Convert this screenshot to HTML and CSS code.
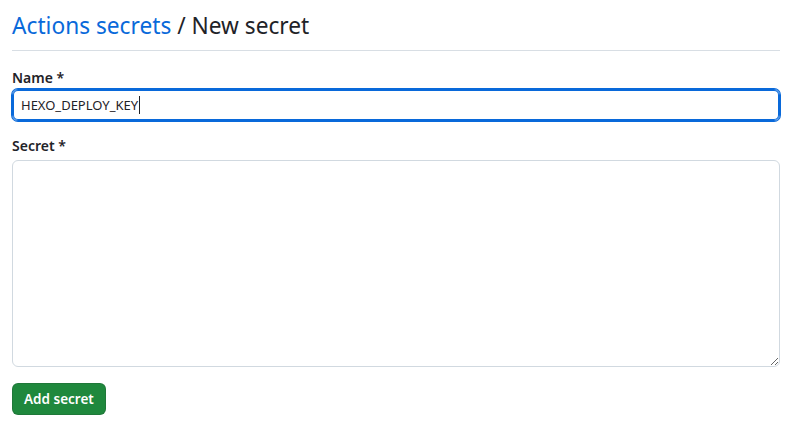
FILE: index.html
```html
<!DOCTYPE html>
<html>
<head>
<meta charset="utf-8">
<link rel="stylesheet" href="styles.css">
</head>
<body>
<div class="page">
  <h2 class="subhead"><a class="crumb" href="#">Actions secrets</a> / New secret</h2>
  <form class="form">
    <div class="group">
      <label class="label">Name *</label>
      <div class="input focused"><span class="value">HEXO_DEPLOY_KEY</span><span class="caret"></span></div>
    </div>
    <div class="group">
      <label class="label label-secret">Secret *</label>
      <textarea class="textarea"></textarea>
    </div>
    <button type="button" class="btn">Add secret</button>
  </form>
</div>
</body>
</html>
```
FILE: styles.css
```css
* { box-sizing: border-box; }
body {
  margin: 0;
  background: #fff;
  font-family: "Noto Sans", "Open Sans", sans-serif;
  color: #1f2328;
}
.page {
  width: 768px;
  margin-left: 12px;
  padding-top: 8px;
}
.subhead {
  margin: 0;
  font-size: 22.7px;
  font-weight: 400;
  line-height: 36px;
  padding-bottom: 6px;
  border-bottom: 1px solid #d8dee4;
}
.crumb { color: #0969da; text-decoration: none; }
.form { padding-top: 17px; }
.group { margin-bottom: 16px; }
.label {
  display: block;
  font-size: 14px;
  font-weight: 600;
  line-height: 20px;
  margin-bottom: 1px;
}
.label-secret { margin-top: -1px; margin-bottom: 4px; }
.input {
  height: 32px;
  border: 1px solid #0969da;
  box-shadow: inset 0 0 0 1px #0969da, 0 0 0 1px #0969da;
  border-radius: 6px;
  display: flex;
  align-items: center;
  padding: 0 8px;
  font-size: 13px;
}
.caret { width: 1px; height: 18px; background: #1f2328; margin-left: 1px; }
.textarea {
  display: block;
  width: 100%;
  height: 207px;
  border: 1px solid #d1d9e0;
  border-radius: 6px;
  resize: vertical;
  font-family: inherit;
}
.btn {
  height: 32px;
  padding: 0 11px;
  background: #1f883d;
  color: #fff;
  border: 1px solid rgba(31,35,40,0.15);
  border-radius: 6px;
  font-family: inherit;
  font-size: 13.5px;
  font-weight: 600;
}
```
